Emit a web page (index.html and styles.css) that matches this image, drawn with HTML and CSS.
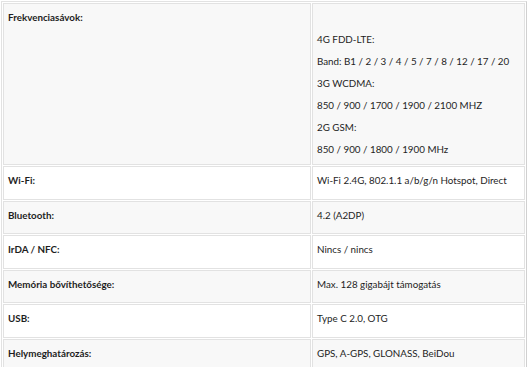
FILE: index.html
```html
<!DOCTYPE html>
<html lang="hu">
<head>
<meta charset="utf-8">
<link rel="stylesheet" href="styles.css">
</head>
<body>
<table class="spec">
  <tr class="odd">
    <td class="label">Frekvenciasávok:</td>
    <td class="value">
      <p>&nbsp;</p>
      <p>4G FDD-LTE:</p>
      <p>Band: B1 / 2 / 3 / 4 / 5 / 7 / 8 / 12 / 17 / 20</p>
      <p>3G WCDMA:</p>
      <p>850 / 900 / 1700 / 1900 / 2100 MHZ</p>
      <p>2G GSM:</p>
      <p>850 / 900 / 1800 / 1900 MHz</p>
    </td>
  </tr>
  <tr class="even">
    <td class="label">Wi-Fi:</td>
    <td class="value"><p>Wi-Fi 2.4G, 802.1.1 a/b/g/n Hotspot, Direct</p></td>
  </tr>
  <tr class="odd">
    <td class="label">Bluetooth:</td>
    <td class="value"><p>4.2 (A2DP)</p></td>
  </tr>
  <tr class="even">
    <td class="label">IrDA / NFC:</td>
    <td class="value"><p>Nincs / nincs</p></td>
  </tr>
  <tr class="odd">
    <td class="label">Memória bővíthetősége:</td>
    <td class="value"><p>Max. 128 gigabájt támogatás</p></td>
  </tr>
  <tr class="even">
    <td class="label">USB:</td>
    <td class="value"><p>Type C 2.0, OTG</p></td>
  </tr>
  <tr class="odd">
    <td class="label">Helymeghatározás:</td>
    <td class="value"><p>GPS, A-GPS, GLONASS, BeiDou</p></td>
  </tr>
</table>
</body>
</html>
```
FILE: styles.css
```css
html, body {
  margin: 0;
  padding: 0;
  background: #ffffff;
}
body {
  font-family: Lato, "Open Sans", sans-serif;
  font-size: 9.8px;
  color: #1e1e1e;
}
.spec {
  margin: 1px 0 0 1px;
  width: 526px;
  border-collapse: separate;
  border-spacing: 1px;
  border: 1px solid #e2e2e2;
  border-right-color: #d0d0d0;
  table-layout: fixed;
}
.spec td {
  border: 1px solid #e2e2e2;
  padding: 2px 4px 7.5px;
  vertical-align: top;
}
.spec .odd td {
  background: #f8f8f8;
}
.spec .even td {
  background: #ffffff;
}
.spec tr:first-child td {
  padding-bottom: 4px;
}
.label {
  width: 298px;
  font-weight: bold;
  line-height: 22px;
}
.value p {
  margin: 0;
  line-height: 22px;
  white-space: nowrap;
}
```
